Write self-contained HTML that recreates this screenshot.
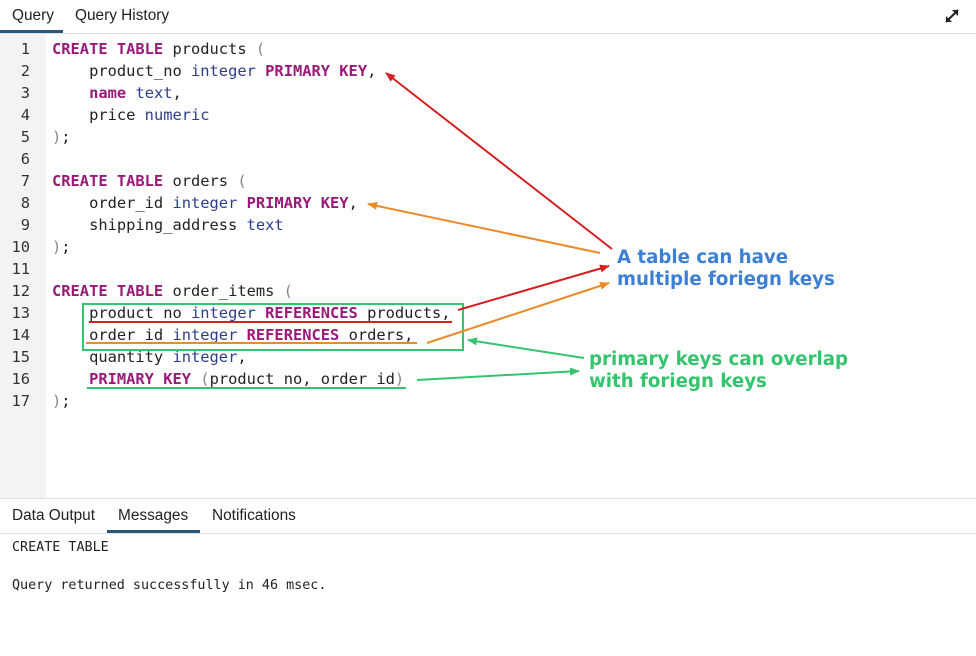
<!DOCTYPE html>
<html><head><meta charset="utf-8"><style>
body{margin:0;width:976px;height:655px;background:#fff;position:relative;overflow:hidden;font-family:"Liberation Sans",Roboto,sans-serif;}
.tabs{position:absolute;left:0;top:0;width:976px;height:33px;border-bottom:1px solid #dde0e6;}
.tab{position:absolute;top:7px;font-size:15.4px;color:#222;}
.ul{position:absolute;height:3px;background:#2a5777;}
.gutter{position:absolute;left:0;top:34px;width:46px;height:464px;background:#f3f3f4;}
.code{position:absolute;left:0;top:38px;font-family:"DejaVu Sans Mono",monospace;font-size:15.4px;line-height:22px;}
.ln{position:absolute;left:0;width:30px;text-align:right;color:#333;}
.tx{position:absolute;left:52px;white-space:pre;color:#222;}
.k{color:#9a1a7a;font-weight:bold}
.t{color:#2c3e8a}
.p{color:#888}
.bottom{position:absolute;left:0;top:498px;width:976px;height:157px;border-top:1px solid #dde0e6;}
.btabs{position:absolute;left:0;top:0;width:976px;height:34px;border-bottom:1px solid #dde0e6;}
.btabs .tab{top:8px}
.msg{position:absolute;left:12px;font-family:"DejaVu Sans Mono",monospace;font-size:13.4px;color:#222;}
.ann{position:absolute;font-family:"DejaVu Sans",sans-serif;font-weight:bold;font-size:18.2px;line-height:22px;}
</style></head><body>
<div class="tabs">
<div class="tab" style="left:12px">Query</div>
<div class="tab" style="left:75px">Query History</div>
<div class="ul" style="left:0;top:30px;width:63px"></div>
<svg style="position:absolute;left:943px;top:7px" width="18" height="18" viewBox="0 0 18 18"><path d="M3 15L15 3" stroke="#222" stroke-width="2"/><path d="M9 3h6v6z M3 9v6h6z" fill="#222"/></svg>
</div>
<div class="gutter"></div>
<div class="code">
<div class="ln" style="top:0">1</div><div class="ln" style="top:22px">2</div><div class="ln" style="top:44px">3</div><div class="ln" style="top:66px">4</div><div class="ln" style="top:88px">5</div><div class="ln" style="top:110px">6</div><div class="ln" style="top:132px">7</div><div class="ln" style="top:154px">8</div><div class="ln" style="top:176px">9</div><div class="ln" style="top:198px">10</div><div class="ln" style="top:220px">11</div><div class="ln" style="top:242px">12</div><div class="ln" style="top:264px">13</div><div class="ln" style="top:286px">14</div><div class="ln" style="top:308px">15</div><div class="ln" style="top:330px">16</div><div class="ln" style="top:352px">17</div>
<div class="tx" style="top:0"><span class="k">CREATE TABLE</span> products <span class="p">(</span></div>
<div class="tx" style="top:22px">    product_no <span class="t">integer</span> <span class="k">PRIMARY KEY</span>,</div>
<div class="tx" style="top:44px">    <span class="k">name</span> <span class="t">text</span>,</div>
<div class="tx" style="top:66px">    price <span class="t">numeric</span></div>
<div class="tx" style="top:88px"><span class="p">)</span>;</div>
<div class="tx" style="top:132px"><span class="k">CREATE TABLE</span> orders <span class="p">(</span></div>
<div class="tx" style="top:154px">    order_id <span class="t">integer</span> <span class="k">PRIMARY KEY</span>,</div>
<div class="tx" style="top:176px">    shipping_address <span class="t">text</span></div>
<div class="tx" style="top:198px"><span class="p">)</span>;</div>
<div class="tx" style="top:242px"><span class="k">CREATE TABLE</span> order_items <span class="p">(</span></div>
<div class="tx" style="top:264px">    product_no <span class="t">integer</span> <span class="k">REFERENCES</span> products,</div>
<div class="tx" style="top:286px">    order_id <span class="t">integer</span> <span class="k">REFERENCES</span> orders,</div>
<div class="tx" style="top:308px">    quantity <span class="t">integer</span>,</div>
<div class="tx" style="top:330px">    <span class="k">PRIMARY KEY</span> <span class="p">(</span>product_no, order_id<span class="p">)</span></div>
<div class="tx" style="top:352px"><span class="p">)</span>;</div>
</div>
<svg style="position:absolute;left:0;top:0" width="976" height="655">
<defs>
<marker id="r" markerWidth="10" markerHeight="8" refX="9" refY="4" orient="auto" markerUnits="userSpaceOnUse"><path d="M0 0L10 4L0 8z" fill="#d42020"/></marker>
<marker id="o" markerWidth="10" markerHeight="8" refX="9" refY="4" orient="auto" markerUnits="userSpaceOnUse"><path d="M0 0L10 4L0 8z" fill="#ec8a25"/></marker>
<marker id="g" markerWidth="10" markerHeight="8" refX="9" refY="4" orient="auto" markerUnits="userSpaceOnUse"><path d="M0 0L10 4L0 8z" fill="#35c46e"/></marker>
</defs>
<rect x="83" y="304" width="380" height="46" fill="none" stroke="#35c46e" stroke-width="2"/>
<line x1="89" y1="322" x2="452" y2="322" stroke="#d42020" stroke-width="2"/>
<line x1="86" y1="343" x2="417" y2="343" stroke="#ec8a25" stroke-width="2"/>
<line x1="87" y1="388" x2="406" y2="388" stroke="#35c46e" stroke-width="2"/>
<line x1="612" y1="249" x2="386" y2="73" stroke="#d42020" stroke-width="2" marker-end="url(#r)"/>
<line x1="600" y1="253" x2="368" y2="204" stroke="#ec8a25" stroke-width="2" marker-end="url(#o)"/>
<line x1="458" y1="310" x2="609" y2="266" stroke="#d42020" stroke-width="2" marker-end="url(#r)"/>
<line x1="427" y1="343" x2="609" y2="283" stroke="#ec8a25" stroke-width="2" marker-end="url(#o)"/>
<line x1="584" y1="358" x2="468" y2="340" stroke="#35c46e" stroke-width="2" marker-end="url(#g)"/>
<line x1="417" y1="380" x2="579" y2="371" stroke="#35c46e" stroke-width="2" marker-end="url(#g)"/>
</svg>
<div class="ann" style="left:617px;top:247px;color:#3d80d3">A table can have<br>multiple foriegn keys</div>
<div class="ann" style="left:589px;top:349px;color:#35c46e">primary keys can overlap<br>with foriegn keys</div>
<div class="bottom">
<div class="btabs">
<div class="tab" style="left:12px">Data Output</div>
<div class="tab" style="left:118px">Messages</div>
<div class="tab" style="left:212px">Notifications</div>
<div class="ul" style="left:107px;top:31px;width:93px"></div>
</div>
<div class="msg" style="top:41px">CREATE TABLE</div>
<div class="msg" style="top:79px">Query returned successfully in 46 msec.</div>
</div>
</body></html>
